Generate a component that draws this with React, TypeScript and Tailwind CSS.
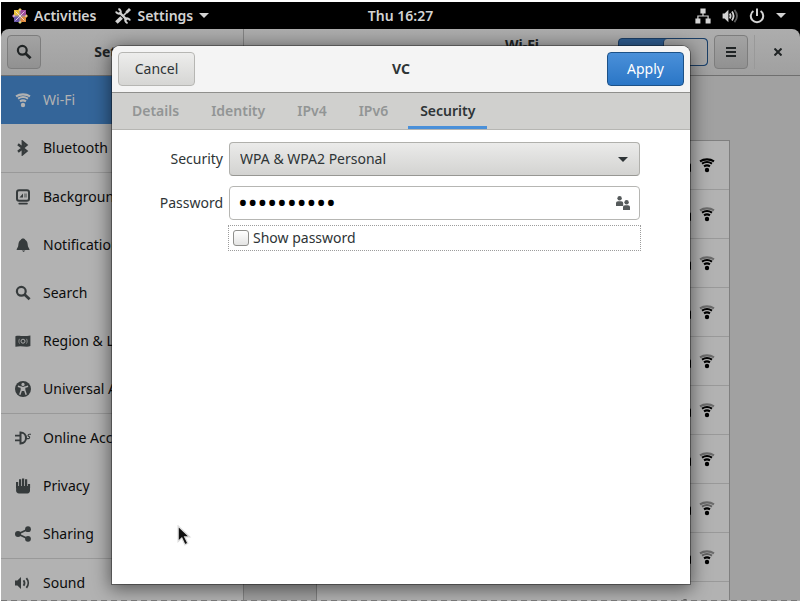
import React from "react";

type IconProps = { className?: string };

function WifiIcon({ className = "", level = 3 }: IconProps & { level?: number }) {
  return (
    <svg viewBox="0 0 16 16" className={className} fill="none" stroke="currentColor" strokeWidth="2.1">
      <circle cx="8" cy="13" r="2.2" fill="currentColor" stroke="none" />
      <path d="M5 9.4C6.8 8.2 9.2 8.2 11 9.4" />
      <path d="M3 6.7C6 4.7 10 4.7 13 6.7" opacity={level >= 2 ? 1 : 0.45} />
      <path d="M1 4.3C5 1.7 11 1.7 15 4.3" opacity={level >= 3 ? 1 : 0.4} />
    </svg>
  );
}

function SearchIcon({ className = "" }: IconProps) {
  return (
    <svg viewBox="0 0 16 16" className={className} fill="none" stroke="currentColor" strokeWidth="2.2">
      <circle cx="6.3" cy="6.3" r="4.4" />
      <path d="M9.5 9.5L14.6 14.2" strokeWidth="2.8" />
    </svg>
  );
}

function BluetoothIcon({ className = "" }: IconProps) {
  return (
    <svg viewBox="0 0 16 16" className={className} fill="none" stroke="currentColor" strokeWidth="2.4">
      <path d="M3 4.2L11.4 11L7.8 14V2L11.4 5L3 11.8" />
    </svg>
  );
}

function BackgroundIcon({ className = "" }: IconProps) {
  return (
    <svg viewBox="0 0 16 16" className={className}>
      <rect x="2" y="1.2" width="12" height="10.6" rx="2" fill="none" stroke="currentColor" strokeWidth="2" />
      <path d="M4.5 8.5L8 4.5V8.5Z" fill="currentColor" />
      <path d="M9 4.5H12V8.5H9Z" fill="currentColor" opacity=".45" />
      <rect x="3.4" y="13.8" width="9.4" height="1.8" rx=".8" fill="currentColor" />
    </svg>
  );
}

function BellIcon({ className = "" }: IconProps) {
  return (
    <svg viewBox="0 0 16 16" className={className} fill="currentColor">
      <path d="M8 1.4C9.4 1.4 10 2 10.2 2.8C12.6 4 12.6 6.6 12.9 9C13.1 10.6 14.6 11.6 14.6 13H1.6C1.6 11.6 3 10.6 3.2 9C3.5 6.6 3.5 4 5.9 2.8C6.1 2 6.8 1.4 8 1.4Z" />
      <path d="M6.8 13.6H10.4L8.6 15Z" />
    </svg>
  );
}

function RegionIcon({ className = "" }: IconProps) {
  return (
    <svg viewBox="0 0 16 16" className={className}>
      <path d="M.4 3.2C4 1.6 7 4.2 15.4 2.4V13C11 14.8 7 12 .4 13.8Z" fill="currentColor" />
      <g fill="none" stroke="#aaaaaa" strokeWidth="1">
        <circle cx="8" cy="8.2" r="2" />
        <path d="M4.6 5.8C3.6 7.2 3.6 9.2 4.6 10.6M11.4 5.8C12.4 7.2 12.4 9.2 11.4 10.6" opacity=".7" />
      </g>
    </svg>
  );
}

function AccessIcon({ className = "" }: IconProps) {
  return (
    <svg viewBox="0 0 16 16" className={className}>
      <circle cx="8" cy="8" r="8" fill="currentColor" />
      <circle cx="8" cy="3.4" r="1.6" fill="#b0b0b0" />
      <path d="M2.9 5.3L6.4 6.3V9L4.8 13.7M13.1 5.3L9.6 6.3V9L11.2 13.7" fill="none" stroke="#b0b0b0" strokeWidth="1.5" />
      <path d="M6 5.8H10V10H6Z" fill="#b0b0b0" />
    </svg>
  );
}

function OnlineIcon({ className = "" }: IconProps) {
  return (
    <svg viewBox="0 0 16 16" className={className} fill="none" stroke="currentColor">
      <path d="M5.5 2.6V13.4C9 13.4 11 11 11 8C11 5 9 2.6 5.5 2.6Z" strokeWidth="2" />
      <path d="M0 5.7H5M0 10.3H5" strokeWidth="1.8" />
      <path d="M11 8.6H13.4C15 8.6 15 6.4 13.8 6.4C12.6 6.4 12.8 4.2 14.2 4.2H16" strokeWidth="1.1" />
    </svg>
  );
}

function HandIcon({ className = "" }: IconProps) {
  return (
    <svg viewBox="0 0 16 16" className={className} fill="none" stroke="currentColor" strokeWidth="2.2">
      <path d="M2.1 4V10M5.1 1.2V9M8.1 .4V9M11.1 1.2V9M14 6V10" />
      <path d="M1.1 8H15V12.6Q15 15.4 12.4 15.4H4Q1.1 15.4 1.1 12.6Z" fill="currentColor" stroke="none" />
    </svg>
  );
}

function ShareIcon({ className = "" }: IconProps) {
  return (
    <svg viewBox="0 0 16 16" className={className} fill="currentColor">
      <path d="M13 3.2L3 8L13 12.8" fill="none" stroke="currentColor" strokeWidth="1.8" />
      <circle cx="3" cy="8" r="3" />
      <circle cx="13" cy="3.2" r="2.9" />
      <circle cx="13" cy="12.8" r="2.9" />
    </svg>
  );
}

function SoundIcon({ className = "" }: IconProps) {
  return (
    <svg viewBox="0 0 16 16" className={className} fill="none" stroke="currentColor" strokeWidth="1.8">
      <path d="M0 5.4H2.4L6 2V14L2.4 10.6H0Z" fill="currentColor" stroke="none" />
      <path d="M8.6 5.2C9.8 7 9.8 9 8.6 10.8" />
      <path d="M11.4 3.2C13.8 6 13.8 10 11.4 12.8" />
    </svg>
  );
}

function LockIcon({ className = "" }: IconProps) {
  return (
    <svg viewBox="0 0 16 16" className={className} fill="currentColor">
      <path d="M4.5 7V5A3.5 3.5 0 0 1 11.5 5V7" fill="none" stroke="currentColor" strokeWidth="2" />
      <rect x="2" y="6.5" width="12" height="8.5" rx="1" />
    </svg>
  );
}

function LogoIcon({ className = "" }: IconProps) {
  return (
    <svg viewBox="0 0 16 16" className={className}>
      <path d="M8 0L11 3H5Z" fill="#efc646" />
      <path d="M16 8L13 11V5Z" fill="#e8b84a" />
      <path d="M8 16L5 13H11Z" fill="#c9d24a" />
      <path d="M0 8L3 5V11Z" fill="#b874c0" />
      <rect x="2" y="2" width="5.6" height="5.6" fill="#e9c23a" />
      <rect x="8.4" y="2" width="5.6" height="5.6" fill="#a04a9c" />
      <rect x="2" y="8.4" width="5.6" height="5.6" fill="#6a56a8" />
      <rect x="8.4" y="8.4" width="5.6" height="5.6" fill="#e08a3c" />
      <path d="M8 1V15M1 8H15M3.5 3.5L12.5 12.5M12.5 3.5L3.5 12.5" stroke="#ecd9e6" strokeWidth=".9" />
    </svg>
  );
}

function ToolsIcon({ className = "" }: IconProps) {
  return (
    <svg viewBox="0 0 16 16" className={className} fill="none" stroke="currentColor">
      <path d="M4.4 4.4L12 12" strokeWidth="2.4" />
      <path d="M1 3.4A3 3 0 0 0 5.4 5.2A3 3 0 0 0 3.4 .9" strokeWidth="2" />
      <path d="M15 12.6A3 3 0 0 0 10.6 10.8A3 3 0 0 0 12.6 15.1" strokeWidth="2" />
      <path d="M1.4 14.6L6.6 9.4" strokeWidth="3.6" />
      <path d="M8 8L12.4 3.6" strokeWidth="1.6" />
      <path d="M11.4 4.6L15 1" strokeWidth="2.8" />
    </svg>
  );
}

function NetworkIcon({ className = "" }: IconProps) {
  return (
    <svg viewBox="0 0 16 16" className={className} fill="currentColor">
      <path d="M5.4 .4H10.6V5.6H5.4ZM.4 10.4H5.4V15.4H.4ZM10.6 10.4H15.6V15.4H10.6Z" />
      <path d="M8 5V8M2.9 11V8H13.1V11" fill="none" stroke="currentColor" strokeWidth="1.2" />
    </svg>
  );
}

function VolumeIcon({ className = "" }: IconProps) {
  return (
    <svg viewBox="0 0 16 16" className={className} fill="none" stroke="currentColor" strokeWidth="1.8">
      <path d="M.6 5.4H2.6L6.4 1.8V14.2L2.6 10.6H.6Z" fill="currentColor" stroke="none" />
      <path d="M7.8 5.4C8.8 7 8.8 9 7.8 10.6" />
      <path d="M10 3.6C12 6.4 12 9.6 10 12.4" />
      <path d="M12.4 1.8C15.6 5.6 15.6 10.4 12.4 14.2" opacity=".45" />
    </svg>
  );
}

function PowerIcon({ className = "" }: IconProps) {
  return (
    <svg viewBox="0 0 16 16" className={className} fill="none" stroke="currentColor" strokeWidth="2">
      <path d="M4.4 3A6.2 6.2 0 1 0 11.6 3" />
      <path d="M8 .4V8" />
    </svg>
  );
}

function Caret({ className = "" }: IconProps) {
  return (
    <svg viewBox="0 0 10 5" className={className} fill="currentColor">
      <path d="M0 0H10L5 5Z" />
    </svg>
  );
}

function PeopleIcon({ className = "" }: IconProps) {
  return (
    <svg viewBox="0 0 16 16" className={className} fill="currentColor">
      <circle cx="4.6" cy="3.2" r="2.2" />
      <path d="M1 11V8Q1 6.2 3 6.2H6.2Q8.2 6.2 8.2 8V11Z" />
      <circle cx="11.6" cy="7.2" r="2.2" />
      <path d="M8 15V12Q8 10.2 10 10.2H13Q15 10.2 15 12V15Z" />
    </svg>
  );
}

type Item = { label: string; icon: React.ComponentType<IconProps>; lined?: boolean };

const items: Item[] = [
  { label: "Bluetooth", icon: BluetoothIcon },
  { label: "Background", icon: BackgroundIcon, lined: true },
  { label: "Notifications", icon: BellIcon },
  { label: "Search", icon: SearchIcon },
  { label: "Region & Language", icon: RegionIcon },
  { label: "Universal Access", icon: AccessIcon },
  { label: "Online Accounts", icon: OnlineIcon, lined: true },
  { label: "Privacy", icon: HandIcon },
  { label: "Sharing", icon: ShareIcon },
  { label: "Sound", icon: SoundIcon, lined: true },
];

const signals = [3, 2, 2, 2, 2, 2, 2, 1, 1, 2];

function TopBar() {
  return (
    <header className="relative flex h-[27px] shrink-0 items-center justify-between bg-black pr-3.5 pl-[11px] font-semibold text-[#d3d3d3]">
      <div className="flex items-center gap-[19px]">
        <button className="flex items-center gap-1.5">
          <LogoIcon className="size-4" />
          Activities
        </button>
        <button className="flex items-center gap-1.5">
          <ToolsIcon className="size-4" />
          Settings
          <Caret className="h-[5px] w-2.5" />
        </button>
      </div>
      <time className="absolute inset-x-0 text-center">Thu 16:27</time>
      <button aria-label="System menu" className="relative flex items-center gap-[11px]">
        <NetworkIcon className="size-4" />
        <VolumeIcon className="size-4" />
        <PowerIcon className="size-4" />
        <Caret className="h-[5px] w-2.5" />
      </button>
    </header>
  );
}

function SettingsWindow() {
  return (
    <div className="flex min-h-0 flex-1 flex-col bg-black">
      <div className="flex h-[47px] shrink-0 rounded-t-lg border-b border-[#6f6f6f] bg-linear-to-b from-[#adadad] to-[#a0a0a0] font-bold text-[#202425]">
        <div className="flex w-[243px] items-center border-r border-[#838383] px-1.5">
          <button aria-label="Search settings" className="flex size-[34px] items-center justify-center rounded-sm border border-[#7d7d7d] bg-linear-to-b from-[#a3a3a3] to-[#919191]">
            <SearchIcon className="size-4" />
          </button>
          <h1 className="flex-1 pr-8 text-center">Settings</h1>
        </div>
        <div className="relative flex flex-1 items-center justify-end pr-[5px]">
          <div className="absolute inset-x-0 top-1 text-center leading-6">Wi-Fi</div>
          <button role="switch" aria-checked="true" aria-label="Wi-Fi" className="relative mr-1.5 flex h-7 w-[90px] overflow-hidden rounded-sm border border-[#1c3f66] bg-[#2d5c8f]">
            <span className="ml-auto h-full w-11 rounded-sm border-l border-[#1c3f66] bg-[#a6a6a6]" />
          </button>
          <button aria-label="Menu" className="relative flex size-[34px] items-center justify-center rounded-sm border border-[#7d7d7d] bg-linear-to-b from-[#a3a3a3] to-[#919191]">
            <svg viewBox="0 0 10 10" className="size-2.5"><path d="M0 1H10M0 5H10M0 9H10" stroke="currentColor" strokeWidth="2" /></svg>
          </button>
          <span className="ml-1.5 h-[34px] w-px bg-[#999999]" />
          <button aria-label="Close" className="relative ml-1.5 flex size-[34px] items-center justify-center">
            <svg viewBox="0 0 8 8" className="size-2"><path d="M.5 .5L7.5 7.5M7.5 .5L.5 7.5" stroke="currentColor" strokeWidth="2" /></svg>
          </button>
        </div>
      </div>
      <div className="flex min-h-0 flex-1">
        <nav className="w-[243px] shrink-0 overflow-hidden border-r border-[#838383] bg-[#b2b2b2] text-[#0c0c0c]">
          <a href="#wifi" className="flex h-12 items-center gap-3 bg-[#346599] pl-3.5 text-[#b2b2b2]">
            <WifiIcon className="size-4" />
            Wi-Fi
          </a>
          {items.map(({ label, icon: Icon, lined }) => (
            <a
              key={label}
              href={"#" + label.split(" ")[0].toLowerCase()}
              className={lined ? "flex h-[49px] items-center gap-3 border-t border-[#999999] pl-3.5" : "flex h-12 items-center gap-3 pl-3.5"}
            >
              <Icon className="size-4 text-[#363b3c]" />
              {label}
            </a>
          ))}
        </nav>
        <main className="min-w-0 flex-1 overflow-hidden bg-[#a1a1a1] pt-16 pr-[70px] pl-[72px]">
          <ul className="divide-y divide-[#999999] border border-[#7f7f7f] bg-[#b2b2b2] font-bold text-black">
            {signals.map((level, i) => (
              <li key={i} className="flex h-[49px] items-center justify-end gap-1.5 pr-3.5">
                <LockIcon className="size-4" />
                <WifiIcon className="size-4" level={level} />
              </li>
            ))}
          </ul>
        </main>
      </div>
    </div>
  );
}

const tabs = ["Details", "Identity", "IPv4", "IPv6", "Security"];

function Dialog() {
  return (
    <section
      role="dialog"
      aria-label="VC"
      className="relative flex h-[538px] w-[578px] max-w-full flex-col overflow-hidden rounded-t-lg bg-white text-[#2e3436] shadow-[0_0_0_1px_rgba(0,0,0,0.35),0_3px_18px_2px_rgba(0,0,0,0.5)]"
    >
      <div className="flex h-[47px] shrink-0 items-center justify-between border-b border-[#8f8f8c] bg-[#f4f4f4] px-1.5">
        <button className="h-[34px] w-[77px] rounded-sm border border-[#b6b6b3] bg-linear-to-b from-[#ededec] to-[#d6d6d4]">Cancel</button>
        <h2 className="font-bold">VC</h2>
        <button className="h-[34px] w-[77px] rounded-sm border border-[#1c5187] bg-linear-to-b from-[#4a90d9] to-[#2a76c6] text-white">Apply</button>
      </div>
      <div role="tablist" className="flex h-[37px] shrink-0 gap-2 border-b border-[#b6b6b3] bg-[#d0d0ce] px-2 font-semibold text-[#929595]">
        {tabs.map((tab) => (
          <button
            key={tab}
            role="tab"
            aria-selected={tab === "Security"}
            className={tab === "Security" ? "border-b-3 border-[#4a90d9] px-3 pt-[3px] text-[#2e3436]" : "px-3"}
          >
            {tab}
          </button>
        ))}
      </div>
      <form className="grid grid-cols-[111px_1fr] items-center gap-x-1.5 pt-3 pr-[50px]" onSubmit={(e) => e.preventDefault()}>
        <label htmlFor="security" className="text-right">Security</label>
        <div className="relative">
          <select id="security" className="h-[34px] w-full appearance-none rounded-sm border border-[#b0b0ac] border-b-[#979793] bg-linear-to-b from-[#ebebea] to-[#d3d3d1] pl-2.5">
            <option>WPA &amp; WPA2 Personal</option>
          </select>
          <Caret className="pointer-events-none absolute top-[15px] right-3 h-[5px] w-2.5" />
        </div>
        <label htmlFor="password" className="text-right">Password</label>
        <div className="flex flex-col pt-2.5 pb-[9px]">
          <div className="relative">
            <input id="password" type="password" defaultValue="passphrase" className="block h-[34px] w-full rounded-sm border border-[#b6b6b3] bg-white px-2 text-[26px] text-black" />
            <PeopleIcon className="pointer-events-none absolute top-[9px] right-[9px] size-4 text-[#555a5b]" />
          </div>
        </div>
        <label className="col-start-2 -mx-px -mt-1 flex h-[26px] items-center gap-1 border border-dotted border-[#9c9c9c] pl-1">
          <input type="checkbox" className="size-4 appearance-none rounded-[3px] border border-[#8f8f8c] bg-linear-to-b from-white to-[#e4e4e3]" />
          Show password
        </label>
      </form>
    </section>
  );
}

export default function App() {
  return (
    <div className="relative flex h-screen flex-col overflow-hidden border-t-2 border-l border-white bg-black font-['Noto_Sans','Open_Sans',sans-serif] text-sm">
      <TopBar />
      <SettingsWindow />
      <div className="absolute inset-0 flex items-start justify-center pt-11 pl-px">
        <Dialog />
      </div>
      <svg aria-hidden="true" viewBox="0 0 17 24" className="absolute top-[523px] left-44 h-[22px] w-4">
        <path d="M1 1V18L5 14.2L8.4 21.6L11.6 20L8.2 13H13.6Z" fill="#111" stroke="#ddd" strokeWidth="1.4" />
      </svg>
      <div className="absolute inset-x-0 bottom-0 h-px bg-[repeating-linear-gradient(90deg,#777777_0,#777777_6px,#b0b0b0_6px,#b0b0b0_10px)]" />
    </div>
  );
}
